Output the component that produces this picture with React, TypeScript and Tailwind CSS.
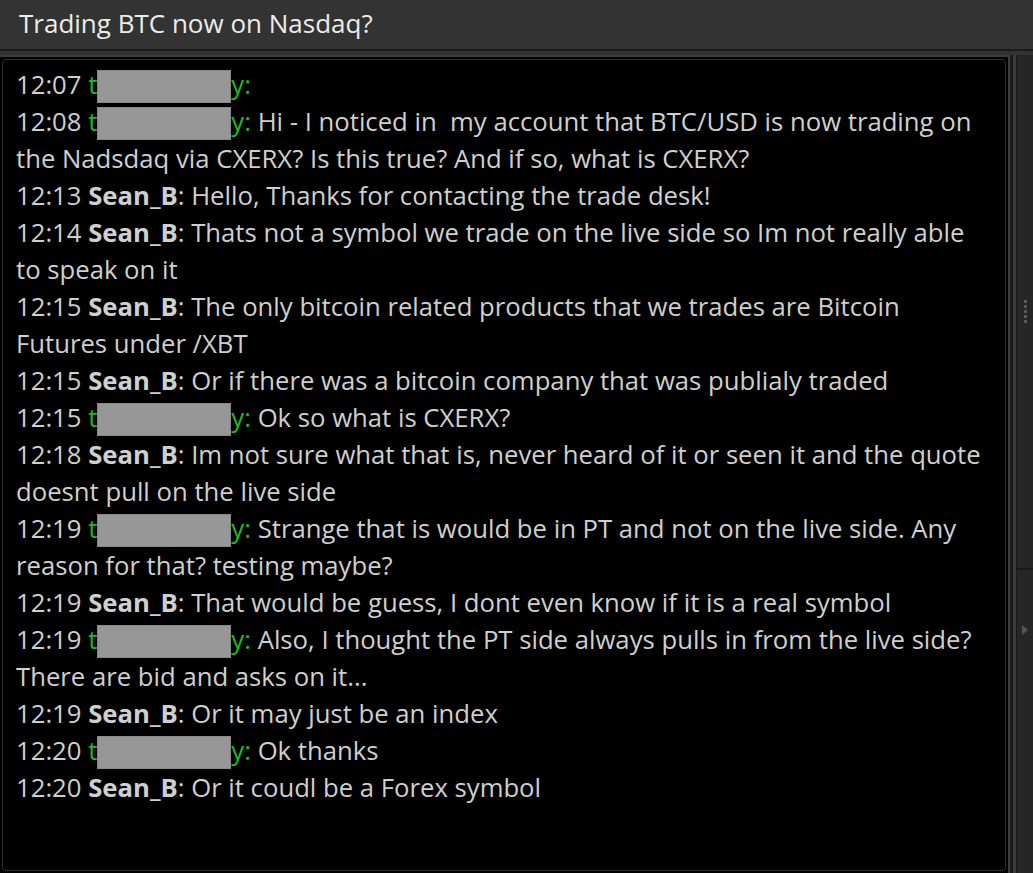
import React from 'react';

type Message = {
  time: string;
  from: 'client' | 'agent';
  text: string;
};

const messages: Message[] = [
  { time: '12:07', from: 'client', text: '' },
  {
    time: '12:08',
    from: 'client',
    text: 'Hi - I noticed in\u00a0 my account that BTC/USD is now trading on the Nadsdaq via CXERX? Is this true? And if so, what is CXERX?',
  },
  { time: '12:13', from: 'agent', text: 'Hello, Thanks for contacting the trade desk!' },
  {
    time: '12:14',
    from: 'agent',
    text: 'Thats not a symbol we trade on the live side so Im not really able to speak on it',
  },
  {
    time: '12:15',
    from: 'agent',
    text: 'The only bitcoin related products that we trades are Bitcoin Futures under /XBT',
  },
  { time: '12:15', from: 'agent', text: 'Or if there was a bitcoin company that was publialy traded' },
  { time: '12:15', from: 'client', text: 'Ok so what is CXERX?' },
  {
    time: '12:18',
    from: 'agent',
    text: 'Im not sure what that is, never heard of it or seen it and the quote doesnt pull on the live side',
  },
  {
    time: '12:19',
    from: 'client',
    text: 'Strange that is would be in PT and not on the live side. Any reason for that? testing maybe?',
  },
  { time: '12:19', from: 'agent', text: 'That would be guess, I dont even know if it is a real symbol' },
  {
    time: '12:19',
    from: 'client',
    text: 'Also, I thought the PT side always pulls in from the live side? There are bid and asks on it...',
  },
  { time: '12:19', from: 'agent', text: 'Or it may just be an index' },
  { time: '12:20', from: 'client', text: 'Ok thanks' },
  { time: '12:20', from: 'agent', text: 'Or it coudl be a Forex symbol' },
];

function Sender({ from }: { from: Message['from'] }) {
  if (from === 'agent') {
    return <span className="font-bold">Sean_B</span>;
  }

  return (
    <span className="text-[#1fbb1f]">
      t
      <span className="inline-block h-[33px] w-[134px] align-[-9px] bg-[#979797] border border-[#8a8a8a]" />
      y
    </span>
  );
}

function ChatLine({ message }: { message: Message }) {
  return (
    <div>
      {message.time} <Sender from={message.from} />
      {message.from === 'client' ? <span className="text-[#1fbb1f]">:</span> : ':'}
      {message.text && ` ${message.text}`}
    </div>
  );
}

export default function App() {
  return (
    <div
      className="w-[1033px] h-[873px] bg-[#333333] flex flex-col overflow-hidden"
      style={{ fontFamily: '"Open Sans", "Noto Sans", sans-serif' }}
    >
      <div className="h-[49px] shrink-0 flex items-center px-[19px] pb-[2px] text-[26px] text-[#ececec]">
        Trading BTC now on Nasdaq?
      </div>
      <div className="h-[2px] shrink-0 bg-[#1c1c1c]" />
      <div className="flex-1 flex pt-[4px] min-h-0">
        <div className="flex-1 bg-black border-t-2 border-r-2 border-[#3d3d3d] p-[2px] min-w-0">
          <div className="h-full border border-[#2f2f2f] rounded-[4px] bg-black pl-[13px] pr-[16px] pt-[6px] text-[25.7px] leading-[37px] text-[#cfcfcf]">
            {messages.map((message, index) => (
              <ChatLine key={index} message={message} />
            ))}
          </div>
        </div>
        <div className="w-[3px] shrink-0 bg-[#1a1a1a]" />
        <div className="w-[3px] shrink-0 bg-[#3a3a3a]" />
        <div className="w-[17px] shrink-0 bg-[#262626] border-l border-[#1a1a1a] flex flex-col">
          <div className="h-[513px] flex flex-col items-center justify-center gap-[2px]">
            {[0, 1, 2, 3, 4].map((dot) => (
              <span key={dot} className="block w-[3px] h-[3px] bg-[#5a5a5a]" />
            ))}
          </div>
          <div className="h-[2px] bg-[#1a1a1a]" />
          <div className="h-[120px] flex items-center justify-center">
            <svg width="6" height="10" viewBox="0 0 6 10">
              <path d="M0 0 L6 5 L0 10 Z" fill="#555555" />
            </svg>
          </div>
        </div>
      </div>
    </div>
  );
}
